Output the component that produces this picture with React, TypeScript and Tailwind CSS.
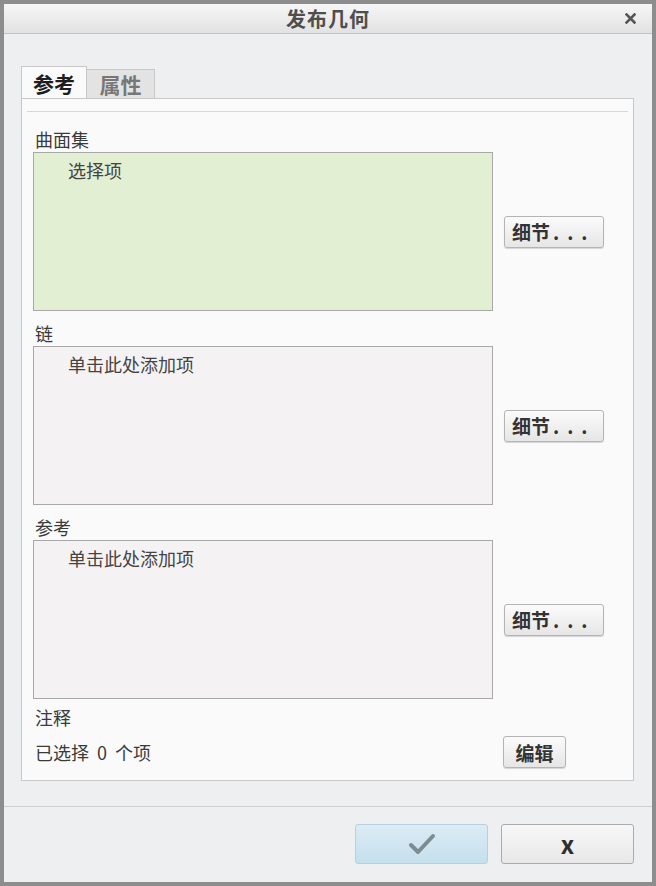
export default function App() {
  const font = { fontFamily: '"Noto Sans CJK SC", "Noto Sans", sans-serif' };

  const sections = [
    { label: "曲面集", text: "选择项", bg: "bg-[#e3efd3]", first: true },
    { label: "链", text: "单击此处添加项", bg: "bg-[#f5f2f3]", first: false },
    { label: "参考", text: "单击此处添加项", bg: "bg-[#f5f2f3]", first: false },
  ];

  return (
    <div
      className="w-[656px] h-[886px] border-[4px] border-[#8d8d8d] bg-[#eeeff0] flex flex-col text-[#3c3c3c]"
      style={font}
    >
      {/* Title bar */}
      <div className="h-[30px] shrink-0 relative flex items-center justify-center bg-gradient-to-b from-[#f6f6f6] to-[#e2e2e2] border-b border-[#c3c3c3]">
        <span className="text-[20px] font-bold tracking-[1px] text-[#4e4e4e] leading-none">发布几何</span>
        <svg className="absolute right-[16px] top-[9px]" width="11" height="11" viewBox="0 0 11 11">
          <path d="M1.5 1.5 L9.5 9.5 M9.5 1.5 L1.5 9.5" stroke="#555" strokeWidth="2.6" strokeLinecap="square" />
        </svg>
      </div>

      {/* Body */}
      <div className="flex flex-col pl-[17px] pr-[18px] pt-[32px]">
        {/* Tabs */}
        <div className="flex items-end h-[33px]">
          <div className="w-[66px] h-[33px] bg-[#fafafa] border border-b-0 border-[#c8c8c8] flex items-center justify-center text-[21px] font-bold text-[#1e1e1e] leading-none">
            参考
          </div>
          <div className="w-[68px] h-[30px] bg-[#e3e3e3] border border-l-0 border-b-0 border-[#c8c8c8] flex items-center justify-center text-[21px] font-bold text-[#777] leading-none">
            属性
          </div>
        </div>

        {/* Panel */}
        <div className="h-[683px] bg-[#fafafa] border border-[#c8c8c8] -mt-px flex flex-col">
          <div className="mx-[5px] mt-[12px] border-t border-[#d6d6d6]" />
          <div className="flex flex-col pl-[11px]">
            {sections.map((s) => (
              <div key={s.label + s.text + s.bg} className="flex flex-col">
                <div
                  className={`${s.first ? "h-[40px]" : "h-[35px]"} flex items-end pb-[4px] pl-[2px] text-[18px] leading-none text-[#3a3a3a]`}
                >
                  {s.label}
                </div>
                <div className="flex items-center">
                  <div className={`w-[460px] h-[159px] ${s.bg} border border-[#a8a8a8] pl-[34px] pt-[6px] text-[18px] leading-[22px] text-[#444]`}>
                    {s.text}
                  </div>
                  <button className="ml-[11px] w-[100px] h-[32px] rounded-[3px] border border-[#b4b4b4] bg-gradient-to-b from-[#fbfbfb] to-[#e6e6e6] shadow-[0_1px_1px_rgba(0,0,0,0.15)] flex items-center pl-[7px] text-[19px] font-bold text-[#333] leading-none">
                    细节<span className="tracking-[8px] ml-[3px]">...</span>
                  </button>
                </div>
              </div>
            ))}
            <div className="h-[36px] flex items-center pl-[2px] text-[18px] leading-none text-[#3a3a3a]">
              注释
            </div>
            <div className="flex items-center h-[34px]">
              <span className="w-[470px] pl-[2px] text-[18px] leading-none text-[#3a3a3a] whitespace-pre">已选择  0  个项</span>
              <button className="w-[63px] h-[32px] rounded-[3px] border border-[#b4b4b4] bg-gradient-to-b from-[#fbfbfb] to-[#e6e6e6] shadow-[0_1px_1px_rgba(0,0,0,0.15)] flex items-center justify-center text-[19px] font-bold text-[#333] leading-none">
                编辑
              </button>
            </div>
          </div>
        </div>
      </div>

      {/* Footer */}
      <div className="mt-[25px] border-t border-[#cfcfcf] flex justify-end gap-[13px] pr-[18px] pt-[17px]">
        <button className="w-[133px] h-[40px] rounded-[3px] border border-[#b7d0df] bg-gradient-to-b from-[#dbecf5] to-[#c5dfed] flex items-center justify-center">
          <svg width="28" height="24" viewBox="0 0 28 24">
            <path d="M3 13 L10 20 L25 4" fill="none" stroke="#7b8c92" strokeWidth="4" strokeLinecap="round" strokeLinejoin="round" />
          </svg>
        </button>
        <button className="w-[133px] h-[40px] rounded-[3px] border border-[#ababab] bg-gradient-to-b from-[#f7f7f7] to-[#e8e8e8] flex items-center justify-center text-[24px] font-bold text-[#2e2e2e] leading-none">
          x
        </button>
      </div>
    </div>
  );
}
